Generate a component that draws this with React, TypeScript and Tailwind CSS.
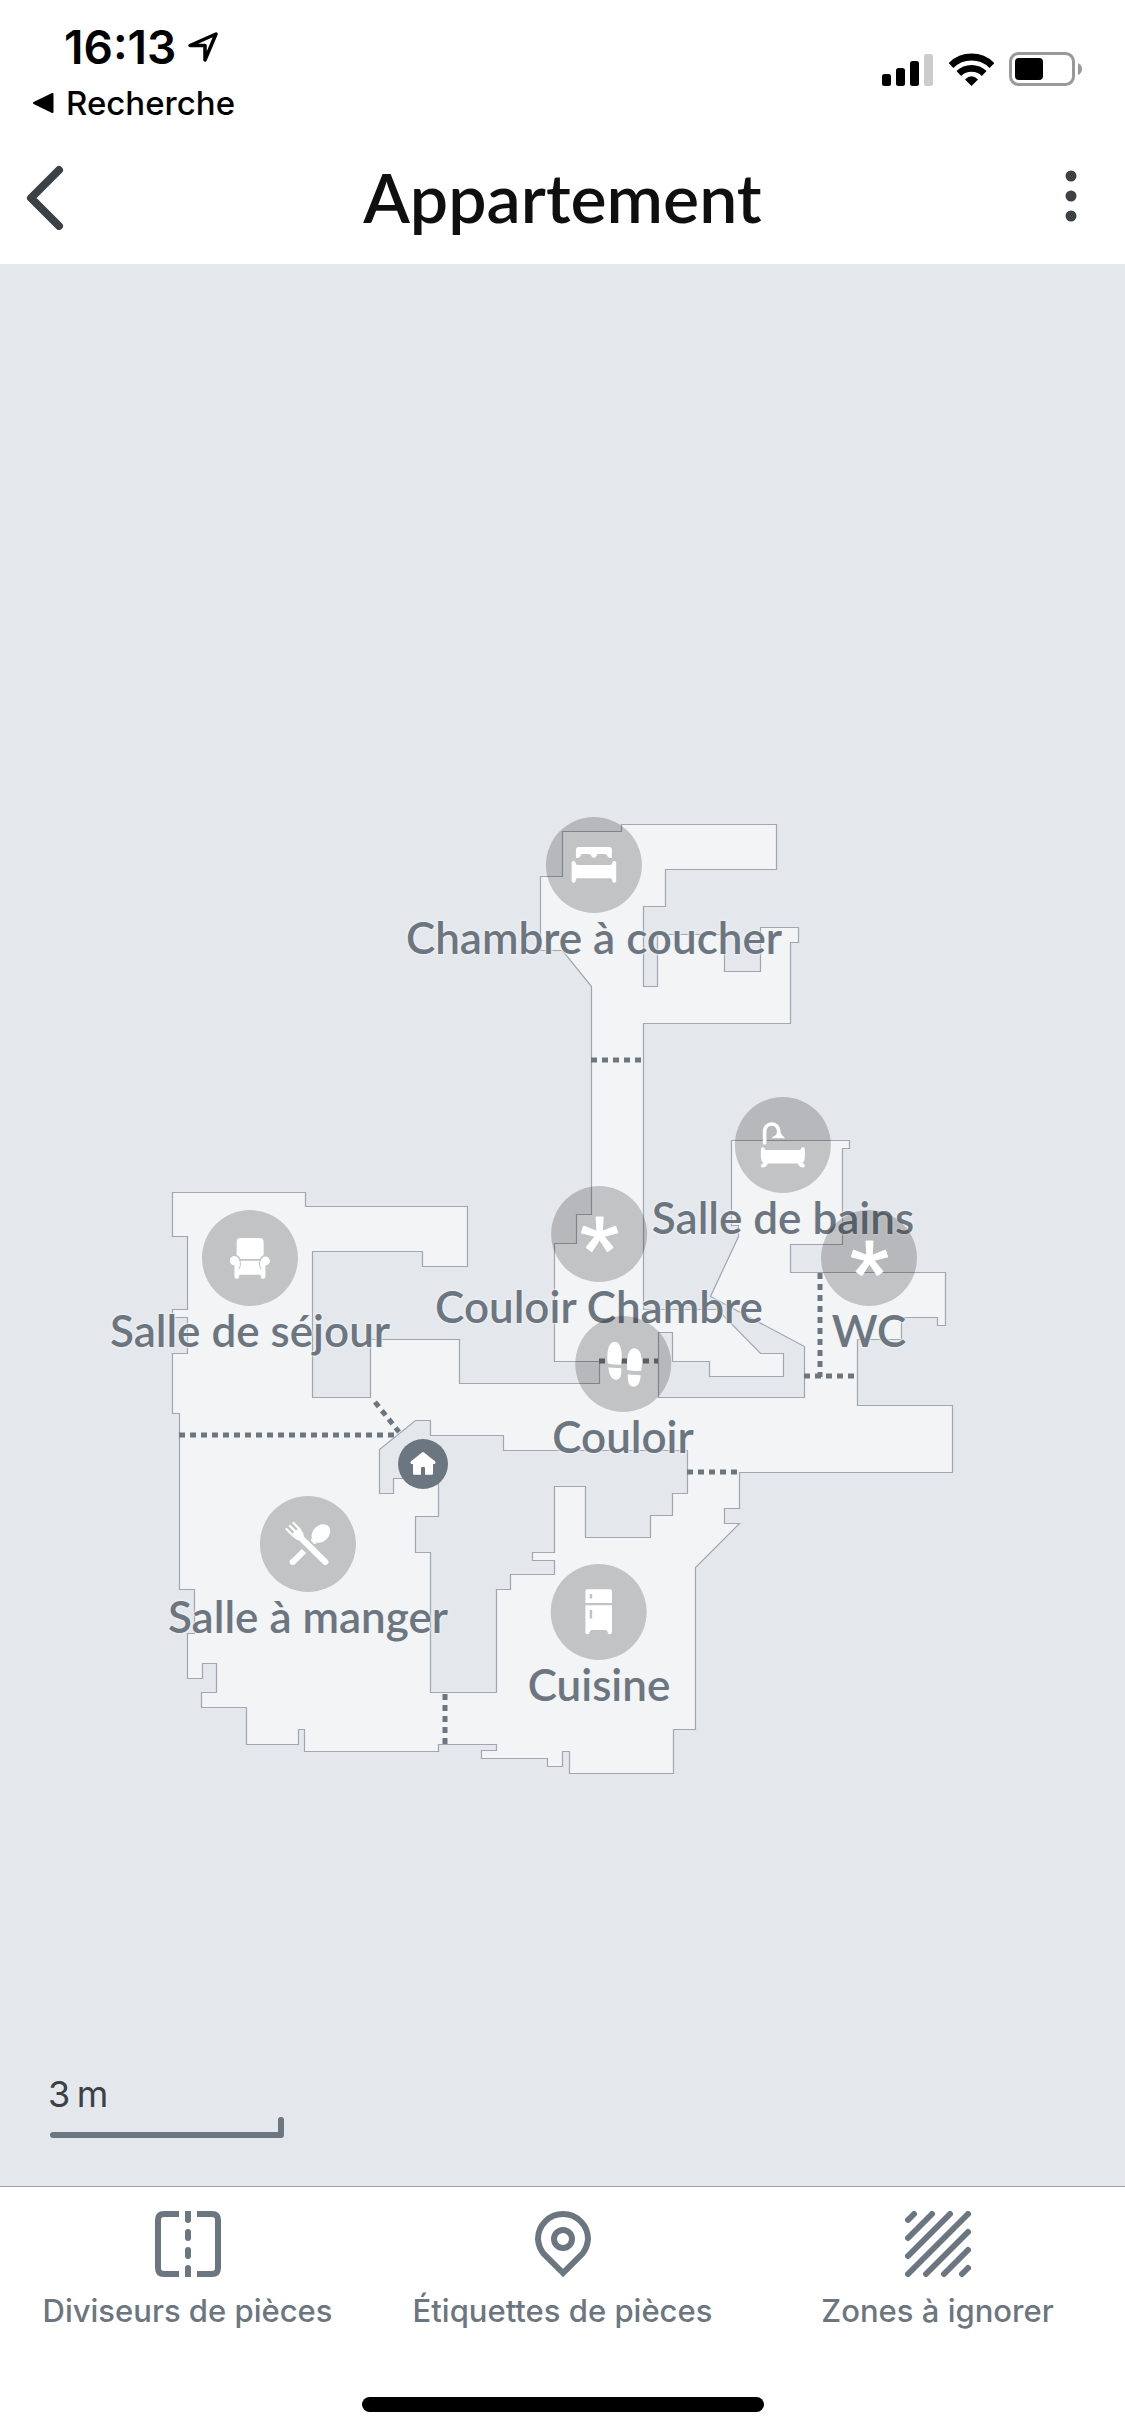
import type { ReactNode } from "react";

type IconName = "bed" | "bath" | "star" | "steps" | "chair" | "dining" | "fridge";

type Room = { label: string; icon: IconName; x: number; y: number };

// Plan coordinates share the origin of the plan's viewBox.
const PLAN = { x: 110, y: 810 };

const ROOMS: Room[] = [
  { label: "Chambre à coucher", icon: "bed", x: 594, y: 865 },
  { label: "Salle de bains", icon: "bath", x: 783, y: 1145 },
  { label: "Couloir Chambre", icon: "star", x: 599, y: 1234 },
  { label: "WC", icon: "star", x: 869, y: 1258 },
  { label: "Salle de séjour", icon: "chair", x: 250, y: 1258 },
  { label: "Couloir", icon: "steps", x: 623, y: 1364 },
  { label: "Salle à manger", icon: "dining", x: 308, y: 1544 },
  { label: "Cuisine", icon: "fridge", x: 599, y: 1612 },
];

const WALLS =
  "M621 824H776V869H665V906H643V986H657V934H724V971H760V927H798V942H790V1023H643V1309H717L760 1353H783V1376H709V1361H672V1332H658V1397H804V1346L710 1296L738 1236V1225H731V1140H849V1148H842V1244H790V1272H945V1325H937V1317H901V1339H857V1405H952V1472H739V1508H724V1523H739L695 1567V1729H673V1773H569V1751H562V1766H547V1758H481V1750H496V1744H438V1751H304V1729H298V1744H246V1707H201V1692H216V1663H202V1678H187V1633H194V1589H179V1413H172V1353H187V1317H172V1309H187V1236H172V1192H305V1206H467V1266H422V1251H312V1397H370V1339H459V1383H599V1361H554V1243H576V1214H591V986L562 950H540V876H562V831H621Z";

const ISLAND =
  "M415 1420H430V1435H503V1450H687V1493H672V1515H650V1537H585V1486H554V1552H532V1560H554V1574H510V1589H496V1692H430V1552H415V1516H438V1478H393V1493H379V1449Z";

const DIVIDERS =
  "M591 1060H643M599 1361H658M820 1273V1377M804 1376H857M687 1472H739M445 1694V1744M179 1435H397M375 1402L399 1432";

function RoomIcon({ name }: { name: IconName }) {
  const cls = "h-12 w-12";
  switch (name) {
    case "bed":
      return (
        <svg viewBox="0 0 48 48" className={cls} fill="currentColor" aria-hidden="true">
          <path d="M6 17V9q0-3 3-3h30q3 0 3 3v8h-2q-2 0-3-3q-.5-1-2-1h-6q-1.5 0-2 1q-1 3-3 3q-2 0-3-3q-.5-1-2-1h-6q-1.500 0-2 1q-1 3-3 3z" />
          <path d="M1.700 22q0-2 2-2t2 2q0 2 2 2h32.600q2 0 2-2t2-2t2 2v17.700q0 2-2 2t-2-2q0-2.400-2-2.400H7.700q-2 0-2 2.400q0 2-2 2t-2-2z" />
        </svg>
      );
    case "bath":
      return (
        <svg viewBox="0 0 48 48" className={cls} fill="currentColor" aria-hidden="true">
          <path d="M5.800 22V10.500a7 7 0 0 1 14-1v4" fill="none" stroke="currentColor" strokeWidth="3.600" strokeLinecap="round" />
          <path d="M13 17.300q0-2 3-2.600q2-1 2-3h4q0 2 3 4q1 1 1 1.600z" />
          <path d="M2 28.500q0-2.200 2-2.200t2 2q.300.700 1.500.700h33q1.200 0 1.500-.700q0-2 2-2t2 2.200V36q0 4-2.500 6l2 1.500q.800.700.500 1.700q-.700 1.400-2.400 1.200q-3.600-.500-4.600-4H9q-1 3.500-4.600 4q-1.700.200-2.400-1.200q-.300-1 .500-1.700l2-1.500Q2 40 2 36z" />
        </svg>
      );
    case "star":
      return (
        <svg viewBox="0 0 48 48" className={cls} fill="currentColor" aria-hidden="true">
          {[0, 72, 144, 216, 288].map((a) => (
            <path key={a} d="M-3 0L-4-17.500q0-1 1-1h6q1 0 1 1L3 0z" transform={`translate(24.500 25) rotate(${a})`} />
          ))}
        </svg>
      );
    case "steps":
      return (
        <svg viewBox="0 0 48 48" className={cls} fill="currentColor" aria-hidden="true">
          <path d="M8.500 23.500C7.500 17 7.500 2 15.700 1.700C22 2 23.500 14 22 24.700Q15 25 8.500 23.500Z" />
          <path d="M9 27.500L22 28.300Q23 39.700 17 39.700Q10.500 40 9 27.500Z" />
          <path d="M28 30C27 18 29 8.300 35 8.300C43 9 43.500 22 42 30.800Q34 31.500 28 30Z" />
          <path d="M28.500 34.500L41.500 35.300Q41 46.700 34 46.700Q28 46.500 28.500 34.500Z" />
        </svg>
      );
    case "chair":
      return (
        <svg viewBox="0 0 48 48" className={cls} fill="currentColor" aria-hidden="true">
          <path d="M10.700 21V8q0-4 4-4h19q4 0 4 4v13q-2.700 1-3.700 4H14.500q-1-3-3.800-4z" />
          <path d="M8.500 22a4.500 4.500 0 0 1 4.500 5.500l2.200-.800h17.600l2.200.800a4.500 4.500 0 1 1 4.500 4v11.500q-.500 1.700-2 1.700h-1.500q-1-.500-1.500-4H13.500q-.500 3.500-1.500 4h-1.500q-1.500 0-2-1.700V31.300A4.600 4.600 0 0 1 8.500 22z" />
          <path d="M13 35q2-3 1.500-7.500M35 35q-2-3-1.500-7.500" fill="none" stroke="#c2c3c4" strokeWidth="1" />
        </svg>
      );
    case "dining":
      return (
        <svg viewBox="0 0 48 48" className={cls} fill="currentColor" aria-hidden="true">
          <path d="M17 18L41.500 42" fill="none" stroke="currentColor" strokeWidth="6" strokeLinecap="round" />
          <path d="M9 42L20 31" fill="none" stroke="currentColor" strokeWidth="6" />
          <circle cx="8.700" cy="42" r="3" />
          <path d="M2.500 9L9 15.500M6 6L12 12M9.500 3L16 9.500" fill="none" stroke="currentColor" strokeWidth="2.200" strokeLinecap="round" />
          <path d="M7.500 14.500L15 8Q21 13 19.500 17L15.500 20.500Q11 20 7.500 14.500Z" />
          <ellipse cx="37" cy="13.500" rx="10.500" ry="8" transform="rotate(-45 37 13.500)" />
          <path d="M27 18L33 24L30 23.800L27 20.500Z" />
        </svg>
      );
    case "fridge":
      return (
        <svg viewBox="0 0 48 48" className={cls} fill="currentColor" fillRule="evenodd" aria-hidden="true">
          <path d="M10.700 15V3.300q0-2 2-2h22.600q2 0 2 2V15zM15 6v4.500h2.500V6z" />
          <path d="M10.700 17.300h26.600v27q0 2-2 2t-2.500-2.500q-.300-1.800-1.800-1.800H17q-1.500 0-1.800 1.800q-.5 2.500-2.500 2.500t-2-2zM15 22v8.500h2.500V22z" />
        </svg>
      );
  }
}

function RoomPin({ room }: { room: Room }) {
  return (
    <div
      className="absolute flex -translate-x-1/2 flex-col items-center"
      style={{ left: room.x - PLAN.x, top: room.y - PLAN.y - 48 }}
    >
      <span className="flex h-24 w-24 items-center justify-center rounded-full bg-black/20 text-white">
        <RoomIcon name={room.icon} />
      </span>
      <span className="font-[Lato,sans-serif] text-[44px] leading-[48px] font-semibold whitespace-nowrap text-[#6c7680] [text-shadow:0_0_2px_#f2f4f6,0_0_2px_#f2f4f6,0_0_3px_#f2f4f6]">
        {room.label}
      </span>
    </div>
  );
}

function StatusBar() {
  return (
    <div className="flex h-[130px] items-start justify-between pt-6 pr-[43px] pl-8">
      <div className="flex flex-col gap-4">
        <div className="flex items-center gap-3 pl-8">
          <span className="text-[46px] leading-[46px] font-semibold">16:13</span>
          <svg viewBox="0 0 30 30" className="h-[30px] w-[30px]" fill="none" stroke="currentColor" strokeWidth="3.500" strokeLinejoin="round" aria-hidden="true">
            <path d="M2 13.500L28 2L17 28V13.500Z" />
          </svg>
        </div>
        <a href="#recherche" className="flex items-center gap-3 text-[33px] leading-[34px] font-medium">
          <svg viewBox="0 0 22 22" className="h-[22px] w-[22px]" fill="currentColor" stroke="currentColor" strokeWidth="2" strokeLinejoin="round" aria-hidden="true">
            <path d="M2 11L20.500 2V20Z" />
          </svg>
          Recherche
        </a>
      </div>
      <div className="flex items-center gap-[15px] pt-7">
        <svg viewBox="0 0 52 33" className="h-[33px] w-[52px]" fill="currentColor" aria-hidden="true">
          <rect x="0" y="21" width="9" height="12" rx="2.500" />
          <rect x="14" y="15" width="9" height="18" rx="2.500" />
          <rect x="28" y="8" width="9" height="25" rx="2.500" />
          <rect x="42" y="1" width="9" height="32" rx="2.500" fill="#ccc" />
        </svg>
        <svg viewBox="0 0 45 33" className="h-[33px] w-[45px]" fill="none" stroke="currentColor" strokeWidth="6.800" aria-hidden="true">
          <path d="M2 12.500A29 29 0 0 1 43 12.500" />
          <path d="M9.800 20.500A18.300 18.300 0 0 1 35.200 20.500" />
          <path d="M22.500 33L16 26.500Q22.500 20 29 26.500Z" fill="currentColor" stroke="none" />
        </svg>
        <svg viewBox="0 0 73 34" className="h-[34px] w-[73px]" aria-hidden="true">
          <rect x="1.500" y="1.500" width="63" height="31" rx="8" fill="none" stroke="#999" strokeWidth="3" />
          <rect x="6" y="6" width="28" height="22" rx="4" />
          <path d="M69 11q4 2 4 6t-4 6z" fill="#999" />
        </svg>
      </div>
    </div>
  );
}

function Tab({ label, children }: { label: string; children: ReactNode }) {
  return (
    <button type="button" className="flex flex-1 flex-col items-center gap-4 text-[#6c7680]">
      <svg viewBox="0 0 66 66" className="h-[66px] w-[66px]" fill="none" stroke="currentColor" strokeWidth="6" aria-hidden="true">
        {children}
      </svg>
      <span className="text-[31px] leading-9 font-medium whitespace-nowrap">{label}</span>
    </button>
  );
}

export default function App() {
  return (
    <div className="flex min-h-screen flex-col bg-white font-[Inter,sans-serif] text-black">
      <header>
        <StatusBar />
        <div className="flex h-[134px] items-center justify-between px-6">
          <button type="button" aria-label="Retour" className="w-[60px] text-[#3c4146]">
            <svg viewBox="0 0 42 66" className="h-[66px] w-[42px]" fill="none" stroke="currentColor" strokeWidth="8" strokeLinecap="round" strokeLinejoin="round" aria-hidden="true">
              <path d="M35 6L7 34L35 62" />
            </svg>
          </button>
          <h1 className="font-[Lato,sans-serif] text-[68px] leading-[72px] font-semibold text-[#0f0f0f]">Appartement</h1>
          <button type="button" aria-label="Plus d'options" className="text-[#3c4146]">
            <svg viewBox="0 0 60 60" className="h-[60px] w-[60px]" fill="currentColor" aria-hidden="true">
              <circle cx="30" cy="9" r="5.500" />
              <circle cx="30" cy="29" r="5.500" />
              <circle cx="30" cy="49" r="5.500" />
            </svg>
          </button>
        </div>
      </header>

      <main className="flex flex-1 flex-col bg-[#e4e7ec] pt-[546px] pb-12">
        <div className="relative mx-auto h-[970px] w-[905px]">
          <svg viewBox="110 810 905 970" className="h-full w-full" aria-hidden="true">
            <g transform="translate(.5 .5)" stroke="#a0a7b0" strokeWidth="1.200">
              <path d={WALLS} fill="#f2f4f6" />
              <path d={ISLAND} fill="#e4e7ec" />
            </g>
            <path d={DIVIDERS} fill="none" stroke="#6c7680" strokeWidth="5" strokeDasharray="6 5" />
          </svg>
          {ROOMS.map((room) => (
            <RoomPin key={room.label} room={room} />
          ))}
          <span className="absolute top-[629px] left-[288px] flex h-[50px] w-[50px] items-center justify-center rounded-full bg-[#6c7680] text-white">
            <svg viewBox="0 0 26 26" className="h-[26px] w-[26px]" fill="currentColor" aria-hidden="true">
              <path d="M12 1.400q1-.800 2 0L25.300 10.500q.700 1.500-.600 2.500H23v9.500q0 1.200-1.200 1.200H15V17q0-1-1-1h-2q-1 0-1 1v6.700H4.200Q3 23.700 3 22.500V13H1.300Q0 12 .700 10.500Z" />
            </svg>
          </span>
        </div>
        <div className="mt-auto ml-12 flex flex-col gap-1 text-[#3c4146]">
          <span className="text-[36px] leading-9">3{"\u2009"}m</span>
          <svg viewBox="0 0 236 22" className="h-[22px] w-[236px]" fill="none" stroke="#6c7680" strokeWidth="6" strokeLinecap="round" strokeLinejoin="round" aria-hidden="true">
            <path d="M5 19H233V4" />
          </svg>
        </div>
      </main>

      <footer className="flex h-[250px] flex-col border-t border-[#9b9fa5] pt-6 pb-6">
        <nav className="flex">
          <Tab label="Diviseurs de pièces">
            <path d="M24 3H9Q3 3 3 9V57Q3 63 9 63H24M42 3H57Q63 3 63 9V57Q63 63 57 63H42" />
            <path d="M33 0V9M33 21V27M33 39V45M33 57V66" />
            <path d="M33 9V9M33 21V27M33 39V45M33 57V57" strokeLinecap="round" />
          </Tab>
          <Tab label="Étiquettes de pièces">
            <path d="M33 62L13.500 42.500A24.500 26 0 0 1 8 28A25 25 0 0 1 58 28A24.500 26 0 0 1 52.500 42.500Z" />
            <circle cx="33" cy="28" r="9" />
          </Tab>
          <Tab label="Zones à ignorer">
            <path
              d="M3 9L9 3M3 27L27 3M3 45L45 3M3 63L63 3M21 63L63 21M39 63L63 39M57 63L63 57"
              strokeLinecap="round"
            />
          </Tab>
        </nav>
        <div className="mx-auto mt-auto h-[15px] w-[402px] rounded-full bg-black" />
      </footer>
    </div>
  );
}
